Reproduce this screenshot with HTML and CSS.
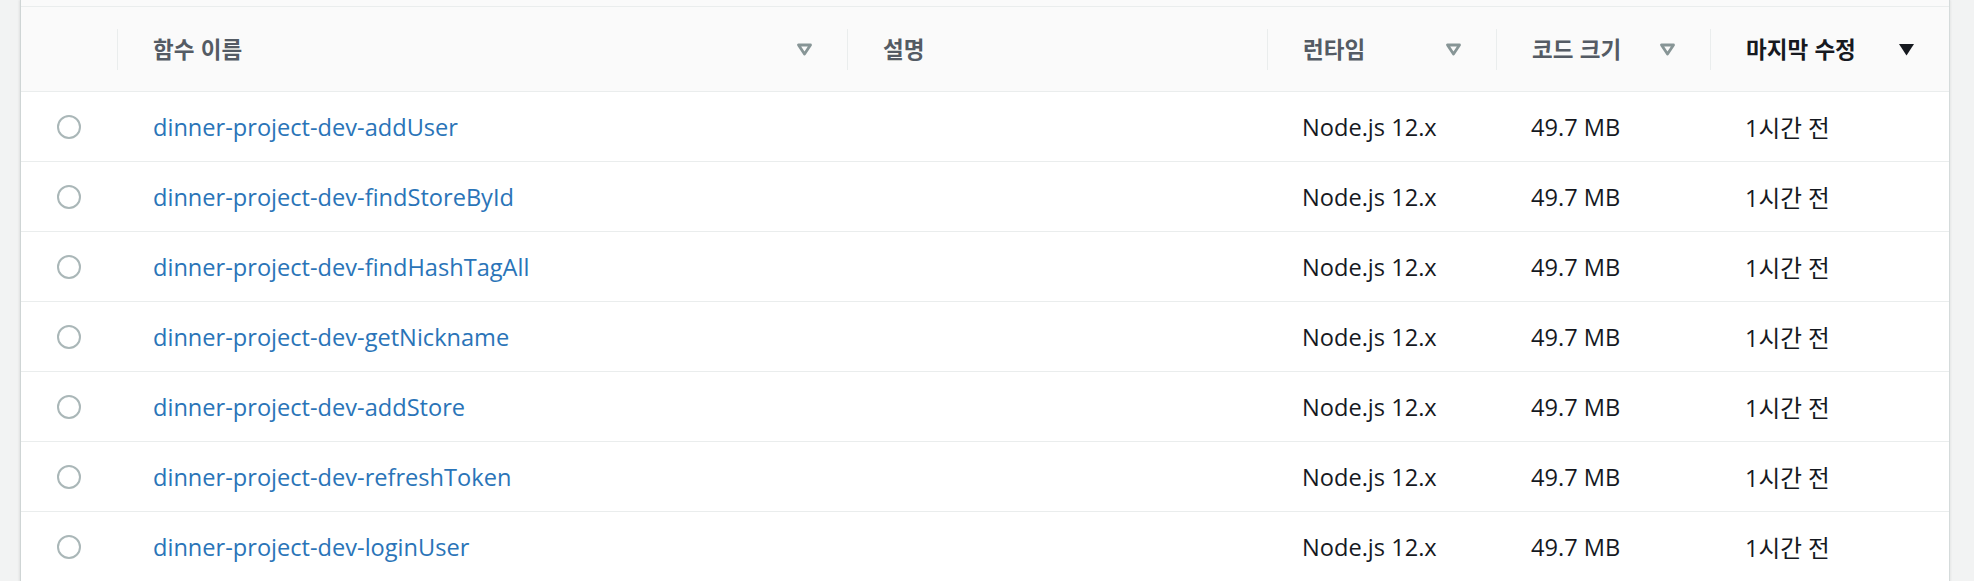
FILE: index.html
```html
<!DOCTYPE html>
<html lang="ko">
<head>
<meta charset="utf-8">
<title>Lambda 함수</title>
<link rel="stylesheet" href="styles.css">
</head>
<body>
<div class="page">
  <div class="panel">
    <div class="panel-top"></div>
    <div class="table">
      <div class="row head">
        <div class="cell select"></div>
        <div class="cell"><div class="th"><span>함수 이름</span><svg class="sort" viewBox="0 0 17 13"><polygon points="2.5,2 14.5,2 8.5,11" fill="none" stroke="#879596" stroke-width="2.8" stroke-linejoin="round"/></svg></div></div>
        <div class="cell"><div class="th"><span>설명</span></div></div>
        <div class="cell"><div class="th"><span>런타임</span><svg class="sort" viewBox="0 0 17 13"><polygon points="2.5,2 14.5,2 8.5,11" fill="none" stroke="#879596" stroke-width="2.8" stroke-linejoin="round"/></svg></div></div>
        <div class="cell"><div class="th"><span>코드 크기</span><svg class="sort" viewBox="0 0 17 13"><polygon points="2.5,2 14.5,2 8.5,11" fill="none" stroke="#879596" stroke-width="2.8" stroke-linejoin="round"/></svg></div></div>
        <div class="cell"><div class="th active"><span>마지막 수정</span><svg class="sort" viewBox="0 0 17 13"><polygon points="1,1 16,1 8.5,12.5" fill="#16191f"/></svg></div></div>
      </div>

      <div class="row">
        <div class="cell select"><span class="radio"></span></div>
        <div class="cell td"><a class="link" href="#">dinner-project-dev-addUser</a></div>
        <div class="cell td"></div>
        <div class="cell td">Node.js 12.x</div>
        <div class="cell td">49.7 MB</div>
        <div class="cell td ko">1시간 전</div>
      </div>
      <div class="row">
        <div class="cell select"><span class="radio"></span></div>
        <div class="cell td"><a class="link" href="#">dinner-project-dev-findStoreById</a></div>
        <div class="cell td"></div>
        <div class="cell td">Node.js 12.x</div>
        <div class="cell td">49.7 MB</div>
        <div class="cell td ko">1시간 전</div>
      </div>
      <div class="row">
        <div class="cell select"><span class="radio"></span></div>
        <div class="cell td"><a class="link" href="#">dinner-project-dev-findHashTagAll</a></div>
        <div class="cell td"></div>
        <div class="cell td">Node.js 12.x</div>
        <div class="cell td">49.7 MB</div>
        <div class="cell td ko">1시간 전</div>
      </div>
      <div class="row">
        <div class="cell select"><span class="radio"></span></div>
        <div class="cell td"><a class="link" href="#">dinner-project-dev-getNickname</a></div>
        <div class="cell td"></div>
        <div class="cell td">Node.js 12.x</div>
        <div class="cell td">49.7 MB</div>
        <div class="cell td ko">1시간 전</div>
      </div>
      <div class="row">
        <div class="cell select"><span class="radio"></span></div>
        <div class="cell td"><a class="link" href="#">dinner-project-dev-addStore</a></div>
        <div class="cell td"></div>
        <div class="cell td">Node.js 12.x</div>
        <div class="cell td">49.7 MB</div>
        <div class="cell td ko">1시간 전</div>
      </div>
      <div class="row">
        <div class="cell select"><span class="radio"></span></div>
        <div class="cell td"><a class="link" href="#">dinner-project-dev-refreshToken</a></div>
        <div class="cell td"></div>
        <div class="cell td">Node.js 12.x</div>
        <div class="cell td">49.7 MB</div>
        <div class="cell td ko">1시간 전</div>
      </div>
      <div class="row">
        <div class="cell select"><span class="radio"></span></div>
        <div class="cell td"><a class="link" href="#">dinner-project-dev-loginUser</a></div>
        <div class="cell td"></div>
        <div class="cell td">Node.js 12.x</div>
        <div class="cell td">49.7 MB</div>
        <div class="cell td ko">1시간 전</div>
      </div>
    </div>
  </div>
</div>
</body>
</html>
```

FILE: styles.css
```css
html, body {
  margin: 0;
  padding: 0;
  background: #f2f3f3;
  font-family: "Open Sans", "Noto Sans CJK KR", sans-serif;
  color: #16191f;
  overflow: hidden;
}

.page {
  padding: 0 24px 0 20px;
}

.panel {
  background: #ffffff;
  border-left: 1px solid #cfd5d5;
  border-right: 1px solid #d5dbdb;
  box-shadow: -1px 0 2px rgba(0, 0, 0, 0.08), 1px 0 2px rgba(0, 0, 0, 0.05);
}

.panel-top {
  height: 6px;
  background: #fafafa;
  border-bottom: 1px solid #eaeded;
}

.row {
  display: grid;
  grid-template-columns: 96px 730px 420px 229px 214px 1fr;
  height: 69px;
  border-bottom: 1px solid #eaeded;
}

.row.head {
  height: 84px;
  background: #fafafa;
}

.cell {
  display: flex;
  align-items: center;
  min-width: 0;
}

.select {
  box-sizing: border-box;
  justify-content: flex-end;
  padding-right: 36px;
}

.radio {
  width: 20px;
  height: 20px;
  border: 2px solid #aab7b8;
  border-radius: 50%;
  background: #fff;
}

.th {
  flex: 1;
  height: 41px;
  border-left: 1px solid #eaeded;
  display: flex;
  align-items: center;
  justify-content: space-between;
  padding: 0 34px 0 35px;
  font-size: 22.5px;
  font-weight: 700;
  color: #545b64;
  font-family: "Noto Sans CJK KR", sans-serif;
}

.th.active {
  color: #16191f;
}

.th span {
  margin-top: -2px;
}

.sort {
  width: 17px;
  height: 13px;
  flex: none;
}

.td {
  padding-left: 35px;
  font-size: 23.6px;
  font-weight: 500;
  white-space: nowrap;
}

.td.ko {
  font-weight: 400;
}

.link {
  color: #2a74b8;
  text-decoration: none;
  padding-left: 1px;
}
```
